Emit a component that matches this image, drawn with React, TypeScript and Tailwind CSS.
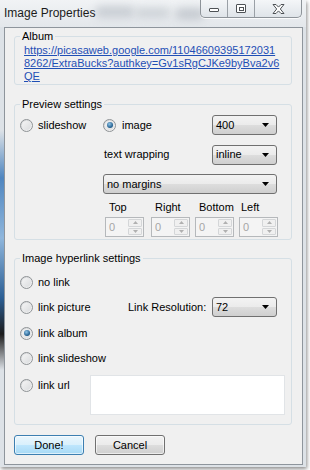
function Radio({ checked }: { checked?: boolean }) {
  return (
    <span className="flex h-[13px] w-[13px] shrink-0 items-center justify-center rounded-full border border-[#8f9396] bg-gradient-to-br from-[#d4d6d8] to-[#f7f7f7]">
      <span className="flex h-[9px] w-[9px] items-center justify-center rounded-full bg-gradient-to-br from-[#f5f5f5] to-[#dadcde]">
        {checked && (
          <span className="h-[6px] w-[6px] rounded-full bg-[radial-gradient(circle_at_40%_35%,#8fc4e8,#1d5a8a_70%)]" />
        )}
      </span>
    </span>
  );
}

function Select({ value, className = "" }: { value: string; className?: string }) {
  return (
    <div
      className={`flex h-[20px] items-center justify-between rounded-[3px] border border-[#707070] bg-[linear-gradient(#f3f3f3_0%,#ebebeb_50%,#dddddd_51%,#cfcfcf_100%)] pl-[3px] pr-[7px] ${className}`}
    >
      <span>{value}</span>
      <svg width="7" height="4" viewBox="0 0 7 4">
        <path d="M0 0h7L3.5 4z" fill="#000" />
      </svg>
    </div>
  );
}

function Spinner() {
  return (
    <div className="flex h-[20px] w-[39px] items-stretch border border-[#b5b8bb] bg-[#f4f4f4] text-[#a6a6a6]">
      <span className="flex-1 pl-[3px] leading-[18px]">0</span>
      <div className="m-[1px] flex w-[14px] flex-col gap-[1px]">
        <span className="flex flex-1 items-center justify-center rounded-[1px] border border-[#d4d6d8] bg-[#f0f0f0]">
          <svg width="5" height="3" viewBox="0 0 5 3">
            <path d="M0 3L2.5 0L5 3z" fill="#b0b0b0" />
          </svg>
        </span>
        <span className="flex flex-1 items-center justify-center rounded-[1px] border border-[#d4d6d8] bg-[#f0f0f0]">
          <svg width="5" height="3" viewBox="0 0 5 3">
            <path d="M0 0h5L2.5 3z" fill="#b0b0b0" />
          </svg>
        </span>
      </div>
    </div>
  );
}

// fieldset keeps no padding of its own so the legend sits at the same x in every group
function Group({ title, className = "", children }: { title: string; className?: string; children: React.ReactNode }) {
  return (
    <fieldset className={`rounded-[3px] border border-[#d5dfe5] ${className}`}>
      <legend className="ml-[5px] px-[2px] leading-[15px]">{title}</legend>
      {children}
    </fieldset>
  );
}

export default function App() {
  return (
    <div className="relative h-[470px] w-[310px] overflow-hidden bg-white font-['Liberation_Sans',Arial,sans-serif] text-[11px] text-black">
      <div className="relative flex h-[467px] w-[306px] flex-col bg-[#dde2e7] pr-[3px] pb-[2px] pl-[4px] shadow-[1px_2px_4px_rgba(0,0,0,0.45)]">
        {/* desktop showing through the glass on the left edge */}
        <span className="absolute left-0 top-[130px] h-[240px] w-[4px] bg-[linear-gradient(#dde2e7,#4f86c0_20%,#8fb6dc_45%,#2c5f95_70%,#1c1c1c_85%,#dde2e7)]" />

        {/* title bar */}
        <div className="relative -ml-[4px] -mr-[3px] flex h-[27px] shrink-0 items-start bg-[linear-gradient(#f1f3f5,#e3e7eb)] pl-[4px]">
          <span className="absolute left-[95px] top-[6px] h-[12px] w-[40px] rounded-full bg-[#c9ced4] blur-[4px]" />
          <span className="absolute left-[135px] top-[8px] h-[10px] w-[35px] rounded-full bg-[#cdd2d7] blur-[4px]" />
          <span className="absolute left-[175px] top-[8px] h-[12px] w-[30px] rounded-full bg-[#c6cbd1] blur-[4px]" />
          <span className="relative mt-[5px] text-[12px] leading-[16px] text-[#1b1b1b]">Image Properties</span>
          <div className="relative ml-auto mr-[4px] flex h-[18px] overflow-hidden rounded-b-[5px] border border-t-0 border-[#8d9399] bg-[linear-gradient(#f4f6f8,#dfe4e9)] shadow-[0_1px_0_rgba(255,255,255,0.8)]">
            <div className="flex w-[27px] items-center justify-center border-r border-[#9aa0a6]">
              <span className="mt-[3px] h-[4px] w-[10px] rounded-[1px] border border-[#4e5256] bg-white" />
            </div>
            <div className="flex w-[27px] items-center justify-center border-r border-[#9aa0a6]">
              <span className="flex h-[9px] w-[10px] items-center justify-center rounded-[1px] border border-[#4e5256] bg-white">
                <span className="h-[4px] w-[5px] border border-[#4e5256]" />
              </span>
            </div>
            <div className="flex w-[46px] items-center justify-center">
              <svg width="13" height="10" viewBox="0 0 13 10">
                <path
                  d="M1 0.5h3l2.5 2.6L9 0.5h3L8.3 5 12 9.5H9L6.5 6.9 4 9.5H1L4.7 5z"
                  fill="#fff"
                  stroke="#4e5256"
                  strokeWidth="1"
                  strokeLinejoin="round"
                />
              </svg>
            </div>
          </div>
        </div>

        {/* client area */}
        <div className="relative flex flex-1 flex-col border border-[#8e959c] bg-[#f0f0f0] pl-[9px] pr-[10px]">
          <Group title="Album" className="mt-[1px]">
            <div className="whitespace-nowrap pl-[9px] pb-[1px] text-[11px] leading-[13px] text-[#1f4fb5] underline">
              https://picasaweb.google.com/11046609395172031
              <br />
              8262/ExtraBucks?authkey=Gv1sRgCJKe9byBva2v6
              <br />
              QE
            </div>
          </Group>

          <Group title="Preview settings" className="mt-[12px]">
            <div className="pl-[5px] pb-[2px]">
              <div className="mt-[3px] flex h-[20px] items-center">
                <div className="flex w-[83px] items-center">
                  <Radio />
                  <span className="ml-[5px]">slideshow</span>
                </div>
                <Radio checked />
                <span className="ml-[6px]">image</span>
                <Select value="400" className="ml-auto mr-[14px] w-[65px]" />
              </div>
              <div className="mt-[10px] flex h-[19px] items-center pl-[84px]">
                <span>text wrapping</span>
                <Select value="inline" className="ml-auto mr-[14px] w-[65px]" />
              </div>
              <Select value="no margins" className="ml-[83px] mr-[14px] mt-[10px]" />
              <div className="ml-[85px] mt-[5px] grid h-[15px] grid-cols-[46px_44px_44px_39px] items-center">
                <span className="pl-[4px]">Top</span>
                <span className="pl-[4px]">Right</span>
                <span className="pl-[4px]">Bottom</span>
                <span className="pl-[2px]">Left</span>
              </div>
              <div className="ml-[85px] mt-[3px] grid grid-cols-[46px_44px_44px_39px]">
                <Spinner />
                <Spinner />
                <Spinner />
                <Spinner />
              </div>
            </div>
          </Group>

          <Group title="Image hyperlink settings" className="mt-[11px]">
            <div className="mt-[6px] flex flex-col pl-[5px] pb-[9px]">
              <div className="flex h-[20px] items-center">
                <Radio />
                <span className="ml-[5px]">no link</span>
              </div>
              <div className="mt-[5px] flex h-[20px] items-center">
                <Radio />
                <span className="ml-[5px] w-[90px]">link picture</span>
                <span>Link Resolution:</span>
                <Select value="72" className="ml-auto mr-[14px] w-[65px]" />
              </div>
              <div className="mt-[6px] flex h-[20px] items-center">
                <Radio checked />
                <span className="ml-[5px]">link album</span>
              </div>
              <div className="mt-[5px] flex h-[20px] items-center">
                <Radio />
                <span className="ml-[5px]">link slideshow</span>
              </div>
              <div className="mt-[5px] flex items-start">
                <div className="mt-[4px] flex items-center">
                  <Radio />
                  <span className="ml-[5px]">link url</span>
                </div>
                <div className="ml-auto mr-[6px] mt-[2px] h-[40px] w-[195px] border border-[#e1e4e7] bg-white" />
              </div>
            </div>
          </Group>

          <div className="mt-[10px] flex gap-[11px]">
            <button className="h-[20px] w-[70px] rounded-[3px] border border-[#3c7fb1] bg-[linear-gradient(#eaf6fd_0%,#d9f0fc_50%,#bee6fd_51%,#a7d9f5_100%)] shadow-[inset_0_0_0_1px_rgba(255,255,255,0.6)]">
              Done!
            </button>
            <button className="h-[20px] w-[70px] rounded-[3px] border border-[#707070] bg-[linear-gradient(#f2f2f2_0%,#ebebeb_50%,#dddddd_51%,#cfcfcf_100%)] shadow-[inset_0_0_0_1px_rgba(255,255,255,0.6)]">
              Cancel
            </button>
          </div>
        </div>
      </div>
    </div>
  );
}
